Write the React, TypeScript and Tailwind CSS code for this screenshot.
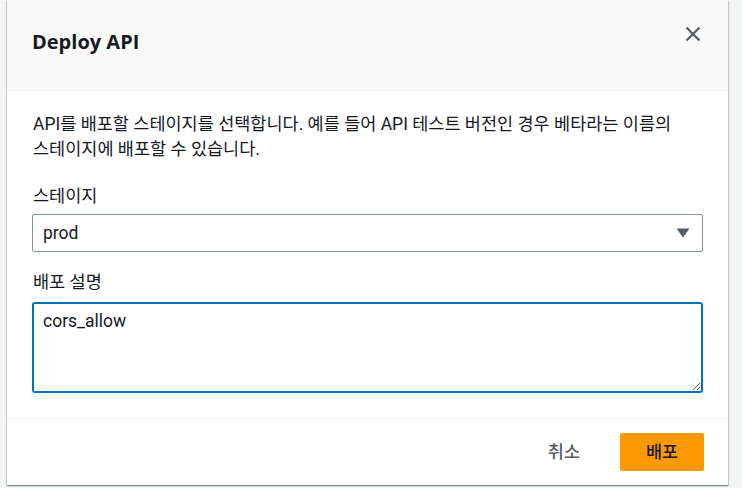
import React from "react";

const body = { fontFamily: 'Roboto, "Noto Sans CJK KR", sans-serif' };

export default function App() {
  return (
    <div
      className="w-[742px] h-[488px] bg-[#f2f3f3] overflow-hidden"
      style={{ fontFamily: '"Open Sans", "Noto Sans CJK KR", sans-serif' }}
    >
      <div className="ml-[7px] w-[721px] h-[485px] bg-white flex flex-col shadow-[0_1px_1px_0_rgba(0,28,36,0.3),1px_1px_1px_0_rgba(0,28,36,0.15),-1px_1px_1px_0_rgba(0,28,36,0.15)]">
        <div className="h-[91px] shrink-0 bg-[#fafafa] border-b border-[#eaeded] flex items-center justify-between pl-[25px] pr-[27px]">
          <h1 className="text-[20px] font-bold text-[#16191f] leading-[24px] mt-[-7px]">
            Deploy API
          </h1>
          <button className="w-[16px] h-[16px] mt-[-23px] text-[#545b64]">
            <svg viewBox="0 0 16 16" width="16" height="16" fill="none" stroke="currentColor" strokeWidth="2.2">
              <path d="M1.5 1.5 L14.5 14.5 M14.5 1.5 L1.5 14.5" />
            </svg>
          </button>
        </div>
        <div className="flex-1 px-[25px] pt-[21px] pb-[24px] flex flex-col text-[#16191f]" style={body}>
          <p className="text-[17.5px] leading-[25px] pl-[1px] break-keep">
            API를 배포할 스테이지를 선택합니다. 예를 들어 API 테스트 버전인 경우 베타라는 이름의 스테이지에 배포할 수 있습니다.
          </p>
          <label className="mt-[23px] text-[17.5px] leading-[22px] pl-[1px]">스테이지</label>
          <div className="mt-[7px] h-[38px] border border-[#879596] rounded-[2px] flex items-center justify-between pl-[10px] pr-[12px]">
            <span className="text-[17.5px] text-[#16191f]">prod</span>
            <svg width="14" height="10" viewBox="0 0 14 10">
              <path d="M0.5 0.5 H13.5 L7 9.5 Z" fill="#545b64" />
            </svg>
          </div>
          <label className="mt-[19px] text-[17.5px] leading-[22px] pl-[1px]">배포 설명</label>
          <textarea
            defaultValue="cors_allow"
            className="mt-[9px] h-[91px] border-2 border-[#0073bb] rounded-[3px] px-[9px] pt-[6px] text-[17.5px] leading-[22px] text-[#16191f] outline-none resize"
            style={body}
          />
        </div>
        <div
          className="h-[67px] shrink-0 border-t border-[#eaeded] flex items-center justify-end pr-[24px] gap-[40px]"
          style={body}
        >
          <button className="text-[17.5px] font-medium text-[#545b64]">취소</button>
          <button className="w-[84px] h-[38px] bg-[#ff9900] rounded-[2px] text-[17.5px] font-medium text-[#16191f]">
            배포
          </button>
        </div>
      </div>
    </div>
  );
}
